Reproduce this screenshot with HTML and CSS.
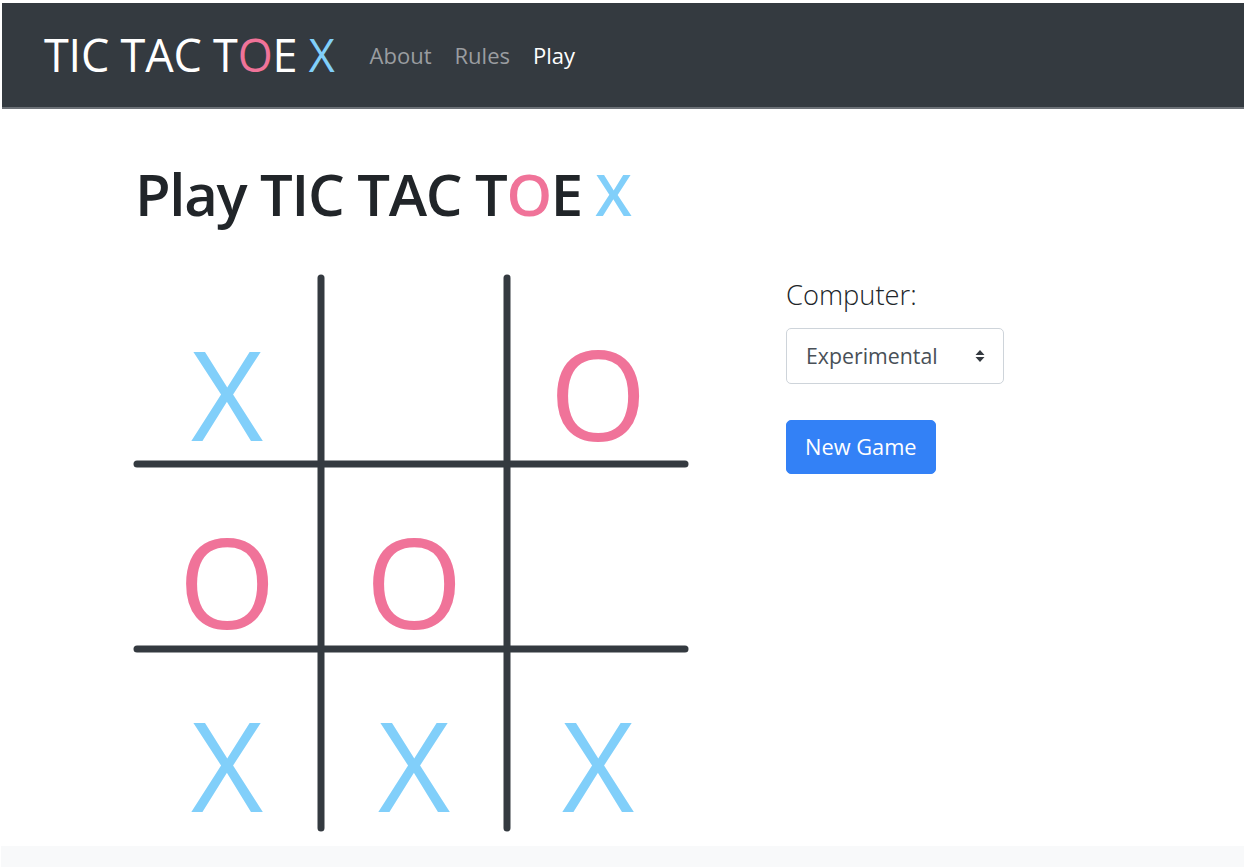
FILE: index.html
```html
<!DOCTYPE html>
<html lang="en">
<head>
<meta charset="utf-8">
<title>Play TIC TAC TOE X</title>
<link rel="stylesheet" href="styles.css">
</head>
<body>
<nav class="navbar">
  <a class="brand" href="#">TIC TAC T<span class="o">O</span>E <span class="x">X</span></a>
  <ul class="nav-links">
    <li><a href="#" class="nav-link">About</a></li>
    <li><a href="#" class="nav-link">Rules</a></li>
    <li><a href="#" class="nav-link active">Play</a></li>
  </ul>
</nav>
<main class="container">
  <h1 class="title">Play TIC TAC T<span class="o">O</span>E <span class="x">X</span></h1>
  <div class="game-row">
    <div class="board">
      <div class="cells">
        <div class="cell x">X</div>
        <div class="cell"></div>
        <div class="cell o">O</div>
        <div class="cell o">O</div>
        <div class="cell o">O</div>
        <div class="cell"></div>
        <div class="cell x">X</div>
        <div class="cell x">X</div>
        <div class="cell x">X</div>
      </div>
      <svg class="grid-lines" width="556" height="560" viewBox="0 0 556 560">
        <g stroke="#343a40" stroke-width="7" stroke-linecap="round">
          <line x1="188" y1="4" x2="188" y2="554"/>
          <line x1="374" y1="4" x2="374" y2="554"/>
          <line x1="4" y1="190" x2="552" y2="190"/>
          <line x1="4" y1="375" x2="552" y2="375"/>
        </g>
      </svg>
    </div>
    <div class="controls">
      <label class="lead" for="computer">Computer:</label>
      <div class="select-wrap">
        <select id="computer" class="custom-select">
          <option>Experimental</option>
        </select>
        <svg class="select-arrows" width="10" height="14" viewBox="0 0 10 14">
          <path d="M5 1 L9.5 6 H0.5 Z M5 13 L9.5 8 H0.5 Z" fill="#343a40"/>
        </svg>
      </div>
      <button class="btn-primary" type="button">New Game</button>
    </div>
  </div>
</main>
<footer class="footer"></footer>
</body>
</html>
```
FILE: styles.css
```css
* { box-sizing: border-box; }

html, body { height: 100%; }

body {
  margin: 0;
  padding: 3px 0 0 2px;
  font-family: "Open Sans", "Noto Sans", sans-serif;
  color: #212529;
  background: #fff;
  display: flex;
  flex-direction: column;
  overflow: hidden;
}

.o { color: #f07399; }
.x { color: #81cffa; }

.navbar {
  height: 106px;
  background: #343a40;
  border-bottom: 2px solid #6c7177;
  display: flex;
  align-items: center;
  padding: 0 0 0 42px;
  flex-shrink: 0;
}

.brand {
  color: #fff;
  text-decoration: none;
  font-size: 45px;
  line-height: 1.2;
  letter-spacing: -0.2px;
  margin-right: 35px;
}

.nav-links {
  list-style: none;
  margin: 0;
  padding: 0;
  display: flex;
  gap: 23px;
}

.nav-link {
  color: #9a9da0;
  text-decoration: none;
  font-size: 22px;
}

.nav-link.active { color: #fff; }

.container {
  flex: 1;
  padding: 50px 0 0 131px;
}

.title {
  margin: 0 0 45px 2px;
  font-size: 58px;
  font-weight: 600;
  line-height: 1.2;
  letter-spacing: -1.3px;
}

.game-row {
  display: flex;
  gap: 97px;
}

.board {
  position: relative;
  width: 556px;
  height: 560px;
}

.cells {
  display: grid;
  grid-template-columns: 188px 186px 182px;
  grid-template-rows: 190px 185px 182px;
}

.cell {
  display: flex;
  align-items: center;
  justify-content: center;
  padding-top: 48px;
  font-size: 125px;
  font-weight: 400;
  line-height: 1;
}

.grid-lines {
  position: absolute;
  left: 0;
  top: 0;
}

.controls {
  display: flex;
  flex-direction: column;
  align-items: flex-start;
  padding-top: 2px;
}

.lead {
  font-size: 27.3px;
  font-weight: 300;
  color: #212529;
  margin-bottom: 15px;
}

.select-wrap {
  position: relative;
  width: 218px;
  margin-bottom: 36px;
}

.custom-select {
  appearance: none;
  -webkit-appearance: none;
  width: 100%;
  height: 56px;
  padding: 0 40px 0 19px;
  font-family: inherit;
  font-size: 21.3px;
  color: #495057;
  background: #fff;
  border: 1px solid #ced4da;
  border-radius: 5px;
}

.select-arrows {
  position: absolute;
  right: 19px;
  top: 21px;
}

.btn-primary {
  height: 54px;
  padding: 0 18px;
  font-family: inherit;
  font-size: 21.8px;
  color: #fff;
  background: #3381f6;
  border: 1px solid #3381f6;
  border-radius: 5px;
}

.footer {
  height: 21px;
  background: #f8f9fa;
  flex-shrink: 0;
  margin-left: -1px;
}
```
